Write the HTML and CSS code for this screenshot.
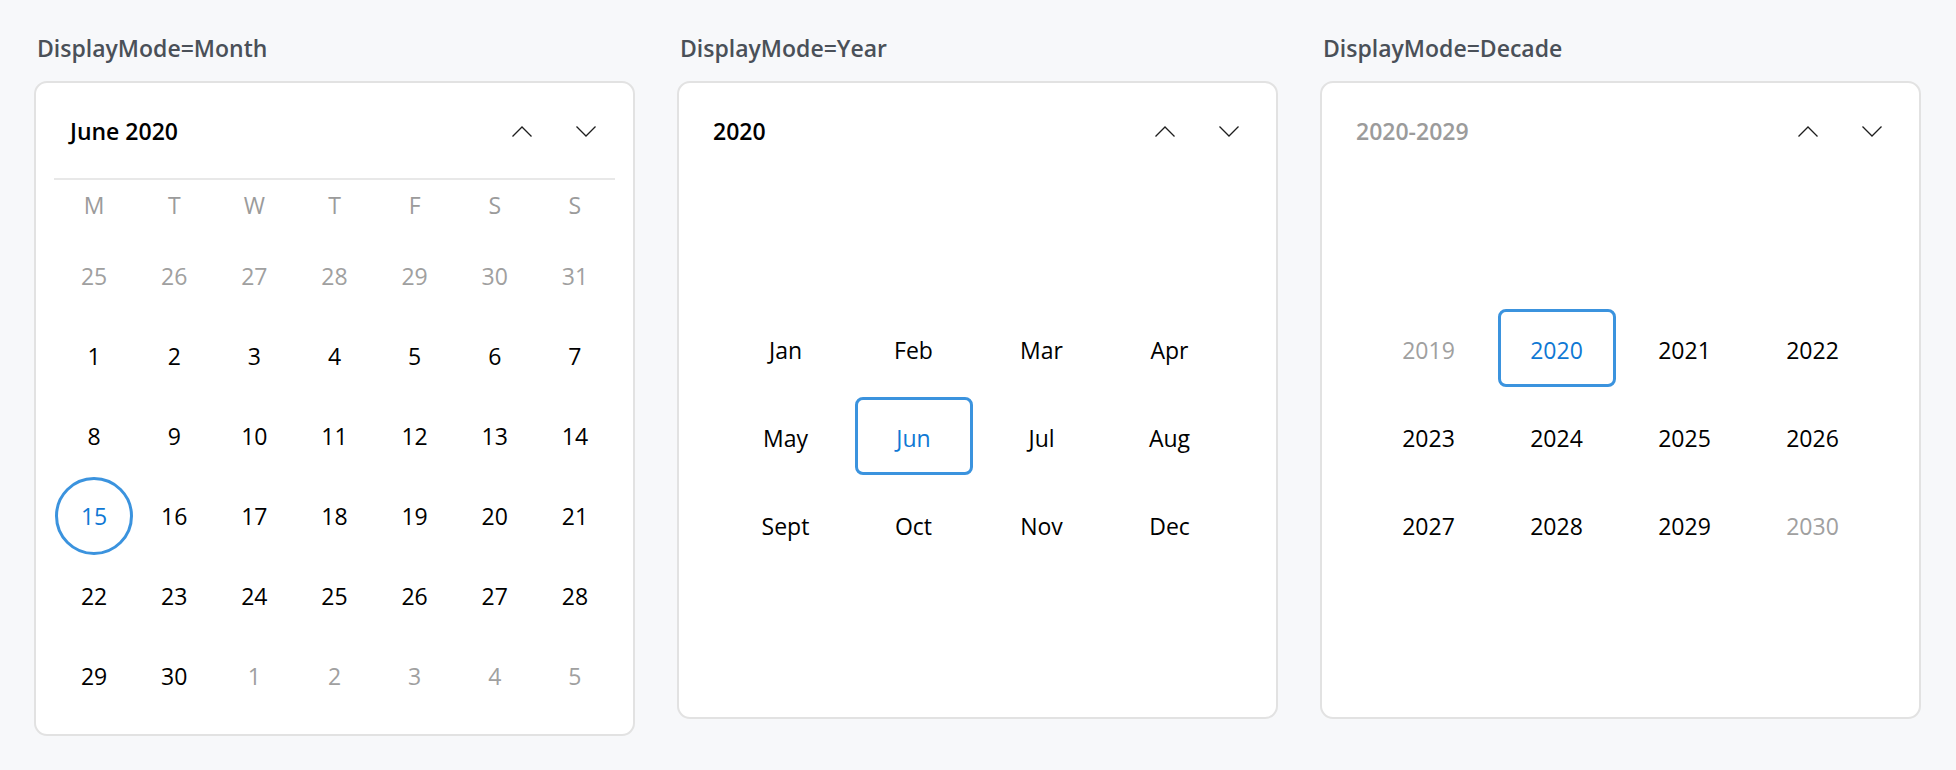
FILE: index.html
```html
<!DOCTYPE html>
<html lang="en">
<head>
  <meta charset="UTF-8">
  <meta name="viewport" content="width=device-width, initial-scale=1.0">
  <title>Calendar display modes</title>
  <link rel="stylesheet" href="styles.css">
</head>
<body>
  <main class="modes">

    <!-- month view -->
    <section class="mode">
      <h2 class="mode-label">DisplayMode=Month</h2>
      <div class="calendar">
        <header class="cal-head has-rule">
          <span class="cal-title">June 2020</span>
          <div class="cal-nav">
            <button class="nav-btn" aria-label="Previous">
              <svg width="20" height="11" viewBox="0 0 20 11"><polyline points="0.5,10.5 10,1 19.5,10.5"/></svg>
            </button>
            <button class="nav-btn" aria-label="Next">
              <svg width="20" height="11" viewBox="0 0 20 11"><polyline points="0.5,0.5 10,10 19.5,0.5"/></svg>
            </button>
          </div>
        </header>
        <div class="weekdays">
          <span>M</span><span>T</span><span>W</span><span>T</span><span>F</span><span>S</span><span>S</span>
        </div>
        <div class="days">
          <span class="muted">25</span><span class="muted">26</span><span class="muted">27</span><span class="muted">28</span><span class="muted">29</span><span class="muted">30</span><span class="muted">31</span>
          <span>1</span><span>2</span><span>3</span><span>4</span><span>5</span><span>6</span><span>7</span>
          <span>8</span><span>9</span><span>10</span><span>11</span><span>12</span><span>13</span><span>14</span>
          <span class="today">15</span><span>16</span><span>17</span><span>18</span><span>19</span><span>20</span><span>21</span>
          <span>22</span><span>23</span><span>24</span><span>25</span><span>26</span><span>27</span><span>28</span>
          <span>29</span><span>30</span><span class="muted">1</span><span class="muted">2</span><span class="muted">3</span><span class="muted">4</span><span class="muted">5</span>
        </div>
      </div>
    </section>

    <!-- year view -->
    <section class="mode">
      <h2 class="mode-label">DisplayMode=Year</h2>
      <div class="calendar">
        <header class="cal-head">
          <span class="cal-title">2020</span>
          <div class="cal-nav">
            <button class="nav-btn" aria-label="Previous">
              <svg width="20" height="11" viewBox="0 0 20 11"><polyline points="0.5,10.5 10,1 19.5,10.5"/></svg>
            </button>
            <button class="nav-btn" aria-label="Next">
              <svg width="20" height="11" viewBox="0 0 20 11"><polyline points="0.5,0.5 10,10 19.5,0.5"/></svg>
            </button>
          </div>
        </header>
        <div class="picker">
          <div class="picker-grid">
            <span>Jan</span><span>Feb</span><span>Mar</span><span>Apr</span>
            <span>May</span><span class="selected">Jun</span><span>Jul</span><span>Aug</span>
            <span>Sept</span><span>Oct</span><span>Nov</span><span>Dec</span>
          </div>
        </div>
      </div>
    </section>

    <!-- decade view -->
    <section class="mode">
      <h2 class="mode-label">DisplayMode=Decade</h2>
      <div class="calendar">
        <header class="cal-head">
          <span class="cal-title dim">2020-2029</span>
          <div class="cal-nav">
            <button class="nav-btn" aria-label="Previous">
              <svg width="20" height="11" viewBox="0 0 20 11"><polyline points="0.5,10.5 10,1 19.5,10.5"/></svg>
            </button>
            <button class="nav-btn" aria-label="Next">
              <svg width="20" height="11" viewBox="0 0 20 11"><polyline points="0.5,0.5 10,10 19.5,0.5"/></svg>
            </button>
          </div>
        </header>
        <div class="picker">
          <div class="picker-grid">
            <span class="muted">2019</span><span class="selected">2020</span><span>2021</span><span>2022</span>
            <span>2023</span><span>2024</span><span>2025</span><span>2026</span>
            <span>2027</span><span>2028</span><span>2029</span><span class="muted">2030</span>
          </div>
        </div>
      </div>
    </section>

  </main>
</body>
</html>
```

FILE: styles.css
```css
body {
  margin: 0;
  background-color: #f7f8fa;
  font-family: 'Open Sans', 'Noto Sans', sans-serif;
  color: #000;
}

.modes {
  display: flex;
  align-items: flex-start;
  gap: 42px;
  padding: 32px 35px 0 34px;
}

.mode {
  width: 601px;
  flex: none;
}

.mode-label {
  margin: 0 0 17px 3px;
  font-size: 23px;
  line-height: 32px;
  font-weight: 600;
  color: #4a5058;
}

.calendar {
  background: #fff;
  border: 2px solid #e2e2e2;
  border-radius: 13px;
  padding: 18px;
}

/* header: title + up/down arrows */
.cal-head {
  display: flex;
  align-items: center;
  justify-content: space-between;
  height: 60px;
  padding: 0 9px 17px 16px;
  border-bottom: 2px solid transparent;
}
.cal-head.has-rule {
  border-bottom-color: #e8e8e8;
}

.cal-title {
  font-size: 23px;
  font-weight: 600;
}
.cal-title.dim {
  color: #9b9b9b;
}

.cal-nav {
  display: flex;
  gap: 24px;
}

.nav-btn {
  width: 40px;
  height: 40px;
  padding: 0;
  border: 0;
  background: none;
  display: flex;
  align-items: center;
  justify-content: center;
}
.nav-btn svg {
  fill: none;
  stroke: #1e1e1e;
  stroke-width: 1.3;
}

/* month grid */
.weekdays, .days {
  display: grid;
  grid-template-columns: repeat(7, 1fr);
  text-align: center;
  font-size: 23px;
}

.weekdays {
  height: 50px;
  margin-bottom: 6px;
  align-items: center;
  color: #9b9b9b;
}

.days span {
  height: 80px;
  display: flex;
  align-items: center;
  justify-content: center;
}

.muted {
  color: #a0a0a0;
}

.days .today {
  color: #0f78d4;
  position: relative;
}
.days .today::before {
  content: '';
  position: absolute;
  width: 72px;
  height: 72px;
  border: 3px solid #3b93de;
  border-radius: 50%;
}

/* year / decade grid */
.picker {
  height: 516px;
  padding-bottom: 3px;
  display: flex;
  align-items: center;
  justify-content: center;
}

.picker-grid {
  display: grid;
  grid-template-columns: repeat(4, 128px);
  grid-auto-rows: 88px;
  font-size: 23px;
}

.picker-grid span {
  display: flex;
  align-items: center;
  justify-content: center;
}

.picker-grid .selected {
  margin: 3px 5px 7px;
  padding-top: 4px;
  border: 3px solid #3b93de;
  border-radius: 8px;
  color: #0f78d4;
}
```
